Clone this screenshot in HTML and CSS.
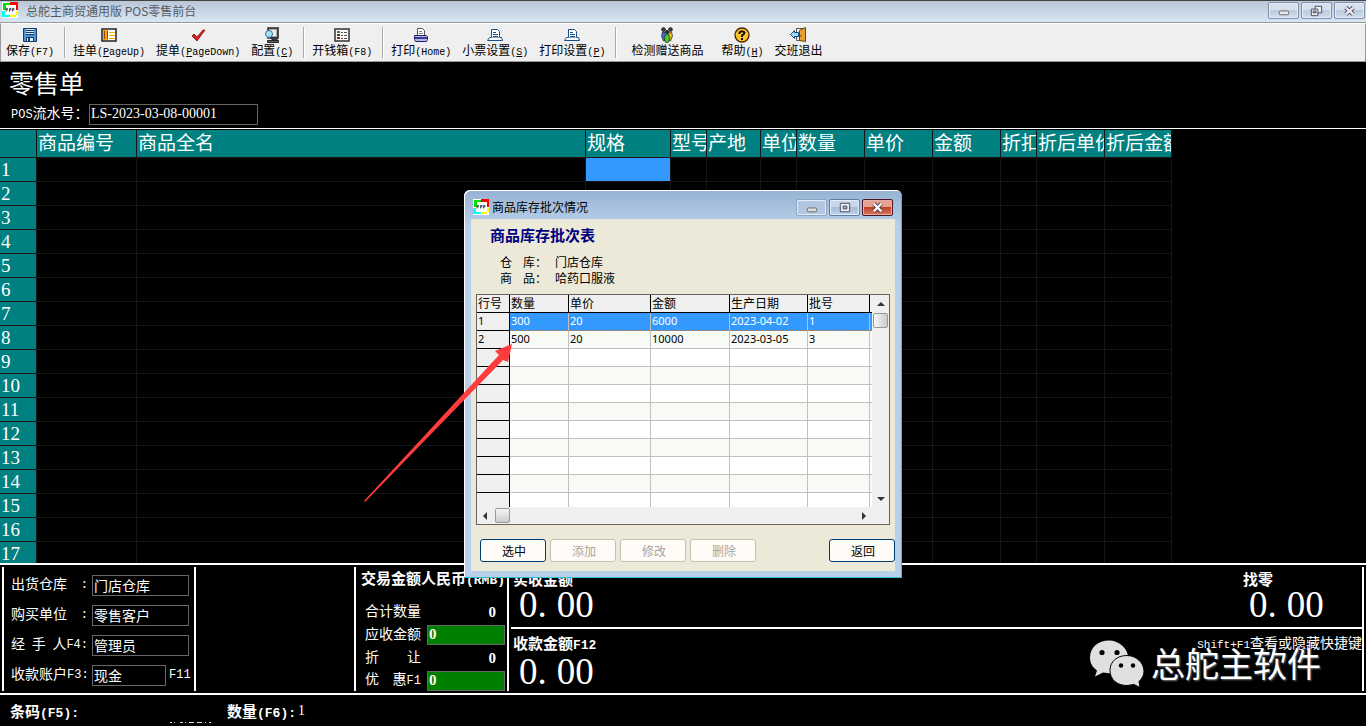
FILE: index.html
```html
<!DOCTYPE html>
<html lang="zh-CN">
<head>
<meta charset="utf-8">
<title>总舵主商贸通用版 POS零售前台</title>
<link rel="stylesheet" href="styles.css">
</head>
<body>
<svg class="defs" aria-hidden="true">
  <symbol id="logo" viewBox="0 0 16 16">
    <path fill="#fff" d="M0 0h16v16H0z"/><path fill="#0d0" d="M1 1h7v2H4v5H1z"/><path fill="#f00" d="M8 0h8v8h-2V3H8z"/><path fill="#0ff" d="M0 9h3v4h5v2H0z"/><path fill="#ff0" d="M14 9h2v4h-2v2H8v-2h6z"/>
    <path stroke="#234" stroke-width=".8" d="M4 9.500V6.500h1.500v1.500H4M7.500 6.500v3M7.500 6.500H9v1.500H7.500M10.500 9.500v-3H12v1.500h-1.500"/>
  </symbol>
  <symbol id="paper" viewBox="0 0 16 14">
    <path fill="#fff" stroke="#15508c" d="M4.500 1.500h6l2 2v6h-8z"/><path stroke="#15508c" d="M6 4.500h3M6 6.500h5M6 8.500h5"/><path fill="#fff" stroke="#15508c" d="M4.500 9.500h-2l-2 3h15l-1-3h-2"/>
  </symbol>
</svg>
<header class="titlebar">
  <svg class="app-icon"><use href="#logo"/></svg>
  <h1 class="app-title">总舵主商贸通用版 POS零售前台</h1>
  <button class="win-btn" aria-label="最小化"><svg viewBox="0 0 30 16"><rect x="10.500" y="8.500" width="10" height="4" rx="1" fill="#e8e8e8" stroke="#666"/></svg></button>
  <button class="win-btn" aria-label="还原"><svg viewBox="0 0 30 16"><path fill="#eee" stroke="#446" d="M13.500 3.500h7v7h-7z"/><path fill="#eee" stroke="#446" d="M9.500 6.500h7v7h-7z"/><path fill="#bcd" stroke="#446" d="M11.500 8.500h3v2h-3z"/></svg></button>
  <button class="win-btn" aria-label="关闭"><svg viewBox="0 0 30 16"><path stroke="#446" stroke-width="4.500" d="m11 5 8 7m0-7-8 7"/><path stroke="#eee" stroke-width="2.500" d="m11 5 8 7m0-7-8 7"/></svg></button>
</header>
<nav class="toolbar">
  <button class="tool"><svg viewBox="0 0 16 16"><path fill="#4d94d4" stroke="#123c6c" d="M1.500 1.500h13v13h-13z"/><path fill="#d6e8f8" d="M4 2h8v5H4z"/><path stroke="#123c6c" d="M4 3.500h8M4 5.500h8M4 7.500h8"/><path fill="#e8f0f8" stroke="#123c6c" d="M4.500 10.500h7v4h-7z"/><path fill="#123c6c" d="M6 11h2v3H6z"/></svg><span>保存<span class="mono">(F7)</span></span></button>
  <i class="sep"></i>
  <button class="tool"><svg viewBox="0 0 16 16"><path fill="#fff" stroke="#222" stroke-width="1.500" d="M1 2h14v12H1z"/><path fill="#f9a800" d="M2 3h5v10H2z"/><path stroke="#a04000" d="M3.500 4v8M6.500 4v8"/><path stroke="#f9a800" d="M8 5.500h6M8 8.500h6M8 11.500h6"/></svg><span>挂单<span class="mono">(<u>P</u>ageUp)</span></span></button>
  <button class="tool"><svg viewBox="0 0 16 16"><path fill="#e02020" stroke="#801010" stroke-width=".8" d="m2 9 2-2 3 3 6-7 2 0-8 11z"/></svg><span>提单<span class="mono">(<u>P</u>ageDown)</span></span></button>
  <button class="tool"><svg viewBox="0 0 16 16"><path fill="#aaa" stroke="#222" stroke-width="1.500" d="M4 1h10v10H4z"/><path fill="#eee" d="M6 3h6v6H6z"/><path fill="#666" stroke="#222" d="M3.500 13.500h11v2h-11zM8 11h5v2H8z"/><circle cx="5" cy="7" r="3.500" fill="#a8e4ff" stroke="#378"/><path stroke="#234" stroke-width="1.500" d="m7 10 3 3"/></svg><span>配置<span class="mono">(<u>C</u>)</span></span></button>
  <i class="sep"></i>
  <button class="tool"><svg viewBox="0 0 16 16"><path fill="#f8f8f8" stroke="#333" stroke-width="1.500" d="M1 2h14v12H1z"/><path fill="#383" d="M3 4h3v2H3z"/><path fill="#444" d="M3 7h3v2H3z"/><path fill="#a22" d="M3 10h3v2H3z"/><path stroke="#555" d="M7 5.500h2m1 0h3M7 8.500h2m1 0h3M7 11.500h2m1 0h3"/></svg><span>开钱箱<span class="mono">(F8)</span></span></button>
  <i class="sep"></i>
  <button class="tool"><svg viewBox="0 0 16 16"><path fill="#fff" stroke="#555" d="M4.500 8.500v-7h5l2 2v5z"/><path stroke="#888" d="M6 4.500h3M6 6.500h4"/><path fill="#b8b8e8" stroke="#22226c" d="M1.500 8.500h12l1 1v3l-1 2h-11l-1-2z"/><path fill="#3a3a90" d="M2 10h12v2H2z"/></svg><span>打印<span class="mono">(Home)</span></span></button>
  <button class="tool"><svg><use href="#paper"/></svg><span>小票设置<span class="mono">(<u>S</u>)</span></span></button>
  <button class="tool"><svg><use href="#paper"/></svg><span>打印设置<span class="mono">(<u>P</u>)</span></span></button>
  <i class="sep"></i>
  <button class="tool gift"><svg viewBox="0 0 16 16"><g fill="#444" stroke="#111"><circle cx="4.500" cy="2.500" r="1.800"/><circle cx="11.500" cy="2.500" r="1.800"/><circle cx="8" cy="5" r="1.500"/></g><path fill="#3d6cd8" stroke="#222" stroke-width=".7" d="M3.500 5h2L7 9l-1.500 5h-1L2.500 9z"/><path fill="#e8c020" stroke="#222" stroke-width=".7" d="M10.500 5h2l1 4-2 5h-1L9 9z"/><path fill="#4cc830" stroke="#222" stroke-width=".7" d="M7 7h2l2 4-2 5H7l-2-5z"/></svg><span>检测赠送商品</span></button>
  <button class="tool"><svg viewBox="0 0 16 16"><circle cx="8" cy="8" r="7" fill="#ffc428" stroke="#4a2000" stroke-width="1.300"/><path fill="none" stroke="#111" stroke-width="2" d="M5.500 7V5.500Q8 3 10.500 5.500 10.500 7 8 8.500V10M8 11v2"/></svg><span>帮助<span class="mono">(<u>H</u>)</span></span></button>
  <button class="tool"><svg viewBox="0 0 16 16"><path fill="#eee" stroke="#555" d="M6.500 1.500h9v12h-9z"/><path fill="#e8a030" stroke="#704008" d="m9.500 3.500 6-3v14l-6-1z"/><path fill="#a0dcf8" stroke="#124a80" d="m.5 7.500 4-4v2h4v4h-4v2z"/><path stroke="#222" d="M11 8v1.500"/></svg><span>交班退出</span></button>
</nav>
<section class="doc-head">
  <h2 class="doc-title">零售单</h2>
  <div class="serial"><label for="serial"><span class="mono">POS</span>流水号：</label><input id="serial" class="box" value="LS-2023-03-08-00001"></div>
</section>
<main class="goods">
  <table class="goods-table">
    <colgroup><col class="c37"><col class="c100"><col class="c449"><col class="c85"><col class="c36"><col class="c54"><col class="c36"><col class="c68"><col class="c68"><col class="c68"><col class="c36"><col class="c68"><col class="c67"></colgroup>
    <thead><tr><th></th><th>商品编号</th><th>商品全名</th><th>规格</th><th>型号</th><th>产地</th><th>单位</th><th>数量</th><th>单价</th><th>金额</th><th>折扣</th><th>折后单价</th><th>折后金额</th></tr></thead>
    <tbody id="goods-rows"></tbody>
  </table>
</main>
<section class="summary">
  <form class="party">
    <div class="field"><label for="wh"><span>出货仓库</span><span class="mono">:</span></label><input id="wh" class="box" value="门店仓库"></div>
    <div class="field"><label for="cu"><span>购买单位</span><span class="mono">:</span></label><input id="cu" class="box" value="零售客户"></div>
    <div class="field"><label for="op"><span class="spread"><span>经</span><span>手</span><span>人</span></span><span class="mono">F4:</span></label><input id="op" class="box" value="管理员"></div>
    <div class="field"><label for="ac"><span>收款账户</span><span class="mono">F3:</span></label><input id="ac" class="box short" value="现金"><span class="mono">F11</span></div>
  </form>
  <div class="blank"></div>
  <div class="totals">
    <h3>交易金额人民币<span class="mono">(RMB)</span></h3>
    <div class="total"><span>合计数量</span><output>0</output></div>
    <div class="total"><label for="due">应收金额</label><input id="due" class="green" value="0"></div>
    <div class="total"><span class="spread"><span>折</span><span>让</span></span><output>0</output></div>
    <div class="total"><label for="off"><span class="spread"><span>优</span><span>惠<span class="mono">F1</span></span></span></label><input id="off" class="green" value="0"></div>
  </div>
  <div class="pay">
    <div class="pay-row">
      <div><h3>实收金额</h3><output class="big">0<span class="point">.</span>00</output></div>
      <div class="change"><h3>找零</h3><output class="big">0<span class="point">.</span>00</output></div>
    </div>
    <div class="pay-row">
      <div><h3>收款金额<span class="mono">F12</span></h3><output class="big">0<span class="point">.</span>00</output></div>
      <p class="hint"><span class="mono">Shift+F1</span>查看或隐藏快捷键</p>
    </div>
    <div class="watermark">
      <svg viewBox="0 0 54 46"><g fill="#e0e0e0"><path d="M19 0C8 0 0 7 0 17c0 6 3 10 7 13l-2 6 8-4 8 1c10 0 17-7 17-16S29 0 19 0z"/><path stroke="#000" d="M37 15c-10 0-17 6-17 15s7 15 17 15l7-1 6 3-1-6c3-3 5-6 5-10 0-9-8-16-17-16z"/></g><g fill="#000"><circle cx="12" cy="12" r="2.600"/><circle cx="27" cy="12" r="2.600"/><circle cx="31" cy="25" r="2.200"/><circle cx="43" cy="25" r="2.200"/></g></svg>
      <span>总舵主软件</span>
    </div>
  </div>
</section>
<footer class="entry">
  <span class="code">条码<span class="mono">(F5):</span></span>
  <span class="qty">数量<span class="mono">(F6):</span></span><span class="qty-val">1</span>
  <svg class="marks" viewBox="0 0 42 2"><path stroke="#ddd" d="M1 1.500h2m2 0h1m5 0h3m2 0h1m3 0h5m3 0h5m3 0h1m3 0h5"/></svg>
</footer>

<section class="dialog" role="dialog" aria-labelledby="dlg-title">
  <header class="dlg-bar">
    <svg class="app-icon"><use href="#logo"/></svg>
    <h2 id="dlg-title">商品库存批次情况</h2>
    <button class="win-btn faded" aria-label="最小化"><svg viewBox="0 0 30 16"><rect x="10.500" y="8.500" width="10" height="4" rx="1" fill="#ddd" stroke="#666"/></svg></button>
    <button class="win-btn" aria-label="最大化"><svg viewBox="0 0 30 16"><path fill="#eee" stroke="#446" d="M10.500 3.500h10v9h-10z"/><path fill="#9bc" stroke="#446" d="M13.500 6.500h4v3h-4z"/></svg></button>
    <button class="win-btn close" aria-label="关闭"><svg viewBox="0 0 30 16"><path stroke="#545" stroke-width="4.500" d="m11 4 8 8m0-8-8 8"/><path stroke="#fff" stroke-width="2.500" d="m11 4 8 8m0-8-8 8"/></svg></button>
  </header>
  <div class="dlg-body">
    <h3 class="dlg-head">商品库存批次表</h3>
    <dl class="info">
      <dt><span>仓</span><span>库：</span></dt><dd>门店仓库</dd>
      <dt><span>商</span><span>品：</span></dt><dd>哈药口服液</dd>
    </dl>
    <div class="lot-box">
      <div class="lot-view">
        <table class="lots">
          <colgroup><col class="c33"><col class="c59"><col class="c82"><col class="c79"><col class="c78"><col class="c62"><col class="c3"></colgroup>
          <thead><tr><th>行号</th><th>数量</th><th>单价</th><th>金额</th><th>生产日期</th><th>批号</th><th></th></tr></thead>
          <tbody id="lot-rows">
            <tr class="picked"><th>1</th><td>300</td><td>20</td><td>6000</td><td>2023-04-02</td><td>1</td><td></td></tr>
            <tr><th>2</th><td>500</td><td>20</td><td>10000</td><td>2023-03-05</td><td>3</td><td></td></tr>
          </tbody>
        </table>
      </div>
      <div class="vbar"><svg viewBox="0 0 8 4"><path d="m0 4 4-4 4 4z"/></svg><i></i><svg class="end" viewBox="0 0 8 4"><path d="m0 0 4 4 4-4z"/></svg></div>
      <div class="hbar"><svg viewBox="0 0 4 8"><path d="M4 0 0 4l4 4z"/></svg><i></i><svg class="end" viewBox="0 0 4 8"><path d="m0 0 4 4-4 4z"/></svg></div>
    </div>
    <div class="actions">
      <button>选中</button><button disabled>添加</button><button disabled>修改</button><button disabled>删除</button><button class="back">返回</button>
    </div>
  </div>
</section>
<svg class="arrow" viewBox="0 0 150 160"><path fill="#ff3b3b" d="M148 0 131 7l4 4L0 157l1 1L139 16l5 2z"/></svg>
<script src="rows.js"></script>
</body>
</html>
```

FILE: styles.css
```css
* { box-sizing: border-box; }
html, body { height: 100%; }
body {
  margin: 0;
  display: flex;
  flex-direction: column;
  overflow: hidden;
  position: relative;
  background: #000;
  color: #fff;
  font: 14px/20px "Liberation Serif", "Noto Sans CJK SC", serif;
}
h1, h2, h3, p, dl, dd { margin: 0; }
button, input { font: inherit; color: inherit; }
svg { display: block; fill: none; }
.defs { position: absolute; width: 0; height: 0; }
.mono { font-family: "Liberation Mono", monospace; font-size: 12px; }
.spread { display: inline-flex; justify-content: space-between; width: 56px; }
.app-icon { width: 16px; height: 16px; }

.titlebar {
  display: flex;
  align-items: flex-start;
  gap: 2px;
  height: 23px;
  padding: 1px 1px 0 2px;
  border-top: 1px solid #444;
  border-bottom: 1px solid #999;
  background: linear-gradient(#b8c6d8, #d9e6f2);
}
.app-title {
  flex: 1;
  padding-left: 6px;
  color: #555b64;
  font: 12px/17px "Noto Sans CJK SC", sans-serif;
}
.win-btn {
  width: 31px;
  height: 17px;
  padding: 0;
  border: 1px solid #7f8fae;
  border-radius: 2px;
  background: linear-gradient(#d6e0ec 50%, #bccbdc 50%, #d0deec);
  box-shadow: inset 0 0 0 1px #e4edf6;
}
.win-btn svg { width: 29px; height: 15px; }

.toolbar {
  display: flex;
  align-items: flex-start;
  gap: 11px;
  height: 39px;
  padding: 3px 5px 0;
  border: 1px solid #999;
  border-top: 1px solid #fff;
  background: #efefef;
  color: #000;
}
.tool {
  display: flex;
  flex-direction: column;
  align-items: center;
  padding: 0;
  border: 0;
  background: none;
  font: 12px/14px "Noto Sans CJK SC", sans-serif;
  white-space: nowrap;
}
.tool svg { width: 16px; height: 16px; }
.tool .mono { font-size: 10px; }
.gift { margin: 0 7px; }
.sep { width: 2px; height: 31px; margin: 0 -4px 0 -1px; background: #aaa; border-right: 1px solid #fff; }

.doc-head { height: 67px; padding: 6px 9px 0; border-bottom: 1px solid #fff; }
.doc-title { font: 25px/28px "Noto Sans CJK SC", sans-serif; }
.serial { display: flex; align-items: center; margin-top: 8px; padding-left: 2px; }
.serial label { width: 78px; white-space: nowrap; }
.serial .box { width: 169px; height: 21px; }
.box {
  min-width: 0;
  width: 97px;
  height: 21px;
  padding: 0 1px 1px;
  border: 1px solid #666;
  background: #000;
}

.goods { flex: 1; min-height: 0; overflow: hidden; padding-top: 1px; }
.goods-table { width: 1172px; table-layout: fixed; border-spacing: 0; }
.goods-table th, .goods-table td {
  height: 24px;
  padding: 0 0 0 1px;
  overflow: hidden;
  border-right: 1px solid #161616;
  border-bottom: 1px solid #161616;
  font: 19px/23px "Liberation Serif", "Noto Sans CJK SC", serif;
  text-align: left;
  white-space: nowrap;
}
.goods-table th { background: #008080; }
.goods-table thead th { height: 28px; line-height: 27px; }
.goods-table .current { background: #3399ff; }
.c3 { width: 3px; } .c33 { width: 33px; } .c36 { width: 36px; } .c37 { width: 37px; }
.c54 { width: 54px; } .c59 { width: 59px; } .c62 { width: 62px; } .c67 { width: 67px; }
.c68 { width: 68px; } .c78 { width: 78px; } .c79 { width: 79px; } .c82 { width: 82px; }
.c85 { width: 85px; } .c100 { width: 100px; } .c449 { width: 449px; }

.summary {
  display: flex;
  height: 132px;
  padding: 2px;
  border-top: 2px solid #fff;
  border-bottom: 2px solid #fff;
}
.party { width: 194px; padding: 3px 0 0 7px; border: solid #fff; border-width: 0 2px; }
.field { display: flex; align-items: center; height: 30px; }
.field label { display: flex; justify-content: space-between; width: 77px; margin-right: 4px; white-space: nowrap; }
.field .short { width: 74px; margin-right: 3px; }
.blank { width: 160px; border-right: 2px solid #fff; }
.totals { width: 153px; padding: 0 2px 0 5px; border-right: 2px solid #fff; }
h3 { font: bold 15px/22px "Noto Sans CJK SC", sans-serif; white-space: nowrap; }
.totals h3 { margin-bottom: 8px; }
.total { display: flex; align-items: center; height: 23px; padding-left: 4px; white-space: nowrap; }
.total > label { width: 63px; }
.total output { margin-left: auto; padding-right: 9px; font-weight: bold; font-size: 15px; }
.green { width: 78px; height: 20px; padding: 0 1px 1px; border: 1px solid #666; background: #008000; font-weight: bold; font-size: 15px; }
.pay { flex: 1; min-width: 0; position: relative; margin-left: 2px; border-right: 2px solid #fff; }
.pay-row { display: flex; justify-content: space-between; height: 62px; padding: 1px 0 0 2px; }
.pay-row:first-child { border-bottom: 2px solid #fff; }
.pay-row + .pay-row { padding-top: 3px; }
.big { display: block; padding-left: 6px; font-size: 37px; line-height: 30px; }
.point { margin-right: 10px; }
.change { width: 119px; }
.hint { font-family: "Noto Sans CJK SC", sans-serif; white-space: nowrap; }
.hint .mono { font-size: 11px; }
.watermark {
  position: absolute;
  right: 41px;
  bottom: 4px;
  display: flex;
  align-items: center;
  gap: 7px;
  color: #fff;
  font: 34px/48px "Noto Sans CJK SC", sans-serif;
  text-shadow: 1px 1px 2px #777;
}
.watermark svg { width: 54px; height: 47px; }

.entry { display: flex; position: relative; height: 31px; padding: 5px 10px; font: bold 15px/22px "Noto Sans CJK SC", sans-serif; }
.code { width: 217px; }
.qty-val { padding-left: 2px; font: 14px/22px "Liberation Serif", serif; }
.entry .mono, h3 .mono { font-size: 13px; }
.marks { position: absolute; left: 169px; bottom: 3px; width: 42px; height: 2px; }

.dialog {
  position: absolute;
  left: calc(50% - 219px);
  top: 190px;
  width: 438px;
  padding: 0 7px 7px;
  border-radius: 6px 6px 0 0;
  background: linear-gradient(#96b2d2, #b9d0ea 36px);
  box-shadow: inset -1px -1px #35bad5, inset 1px 1px #fff;
  color: #000;
  font: 12px/16px "Noto Sans CJK SC", sans-serif;
}
.dlg-bar { display: flex; align-items: flex-start; gap: 2px; height: 29px; padding: 9px 2px 0; }
.dlg-bar h2 { flex: 1; padding-left: 1px; font: 12px/16px "Noto Sans CJK SC", sans-serif; }
.dlg-bar .win-btn { background: linear-gradient(#c8d8ea 50%, #a5bdd9 50%, #bed3ea); border-color: #5f7da8; }
.dlg-bar .faded { border-color: #8da3c2; background: #b2c7df; }
.dlg-bar .close { border-color: #4a1420; background: linear-gradient(#e8a090 50%, #c04028 50%, #d87860); box-shadow: inset 0 0 0 1px #e8b0a4; }
.dlg-body { padding: 5px 0 9px 5px; background: #ece9d8; }
.dlg-head { padding-left: 14px; color: #000080; }
.info { display: grid; grid-template-columns: 55px 1fr; margin: 8px 0; padding-left: 24px; }
.info dt { display: flex; justify-content: space-between; width: 47px; }
.lot-box {
  display: grid;
  grid-template: 212px 17px / 1fr 17px;
  margin-right: 5px;
  border: 1px solid #646464;
  background: #efefef;
}
.lot-view { overflow: hidden; background: #fff; }
.lots { width: 396px; table-layout: fixed; border-spacing: 0; }
.lots th, .lots td {
  height: 18px;
  padding: 0 0 1px 1px;
  overflow: hidden;
  border-right: 1px solid #c0c0c0;
  border-bottom: 1px solid #c0c0c0;
  font: 11px/16px "Noto Sans", sans-serif;
  text-align: left;
  white-space: nowrap;
}
.lots th { background: #efefef; border-color: #000; }
.lots thead th { font: 12px/16px "Noto Sans CJK SC", sans-serif; }
.lots tr > :last-child { padding: 0; border-right: 0; }
.lots tbody tr:nth-child(even) td { background: #f8faf5; }
.lots .picked td { background: #3399ff; color: #fff; border-bottom: 1px dashed #c87830; }
.vbar, .hbar { display: flex; align-items: center; background: #efefef; }
.vbar { flex-direction: column; padding: 7px 0 6px; }
.hbar { padding: 0 6px; }
.vbar svg { width: 8px; height: 4px; }
.hbar svg { width: 4px; height: 8px; }
.vbar path, .hbar path { fill: #333; }
.vbar i, .hbar i { border: 1px solid #999; border-radius: 2px; width: 15px; height: 15px; background: linear-gradient(90deg, #f6f6f6, #ccc); }
.vbar i { margin-top: 7px; }
.hbar i { margin-left: 8px; background: linear-gradient(#f6f6f6, #ccc); }
.vbar .end { margin-top: auto; }
.hbar .end { margin-left: auto; }
.actions { display: flex; gap: 4px; margin-top: 14px; padding-left: 4px; }
.actions button { width: 66px; height: 23px; padding: 0 0 0 2px; border: 1px solid #003c74; border-radius: 3px; background: #fffcf8; line-height: 19px; }
.actions button:disabled { border-color: #c4c1b4; color: #a6a6a0; }
.actions .back { margin-left: auto; }
.arrow { position: absolute; left: calc(50% - 319px); top: 344px; width: 150px; height: 160px; }
```

FILE: rows.js
```js
const goods = document.getElementById('goods-rows');
for (let n = 1; n <= 17; n++) {
  const row = goods.insertRow();
  const head = document.createElement('th');
  head.textContent = n;
  row.append(head);
  for (let c = 0; c < 12; c++) {
    const cell = row.insertCell();
    if (n === 1 && c === 2) cell.className = 'current';
  }
}
const lots = document.getElementById('lot-rows');
for (let n = 0; n < 9; n++) {
  const row = lots.insertRow();
  row.append(document.createElement('th'));
  for (let c = 0; c < 6; c++) row.insertCell();
}
```
